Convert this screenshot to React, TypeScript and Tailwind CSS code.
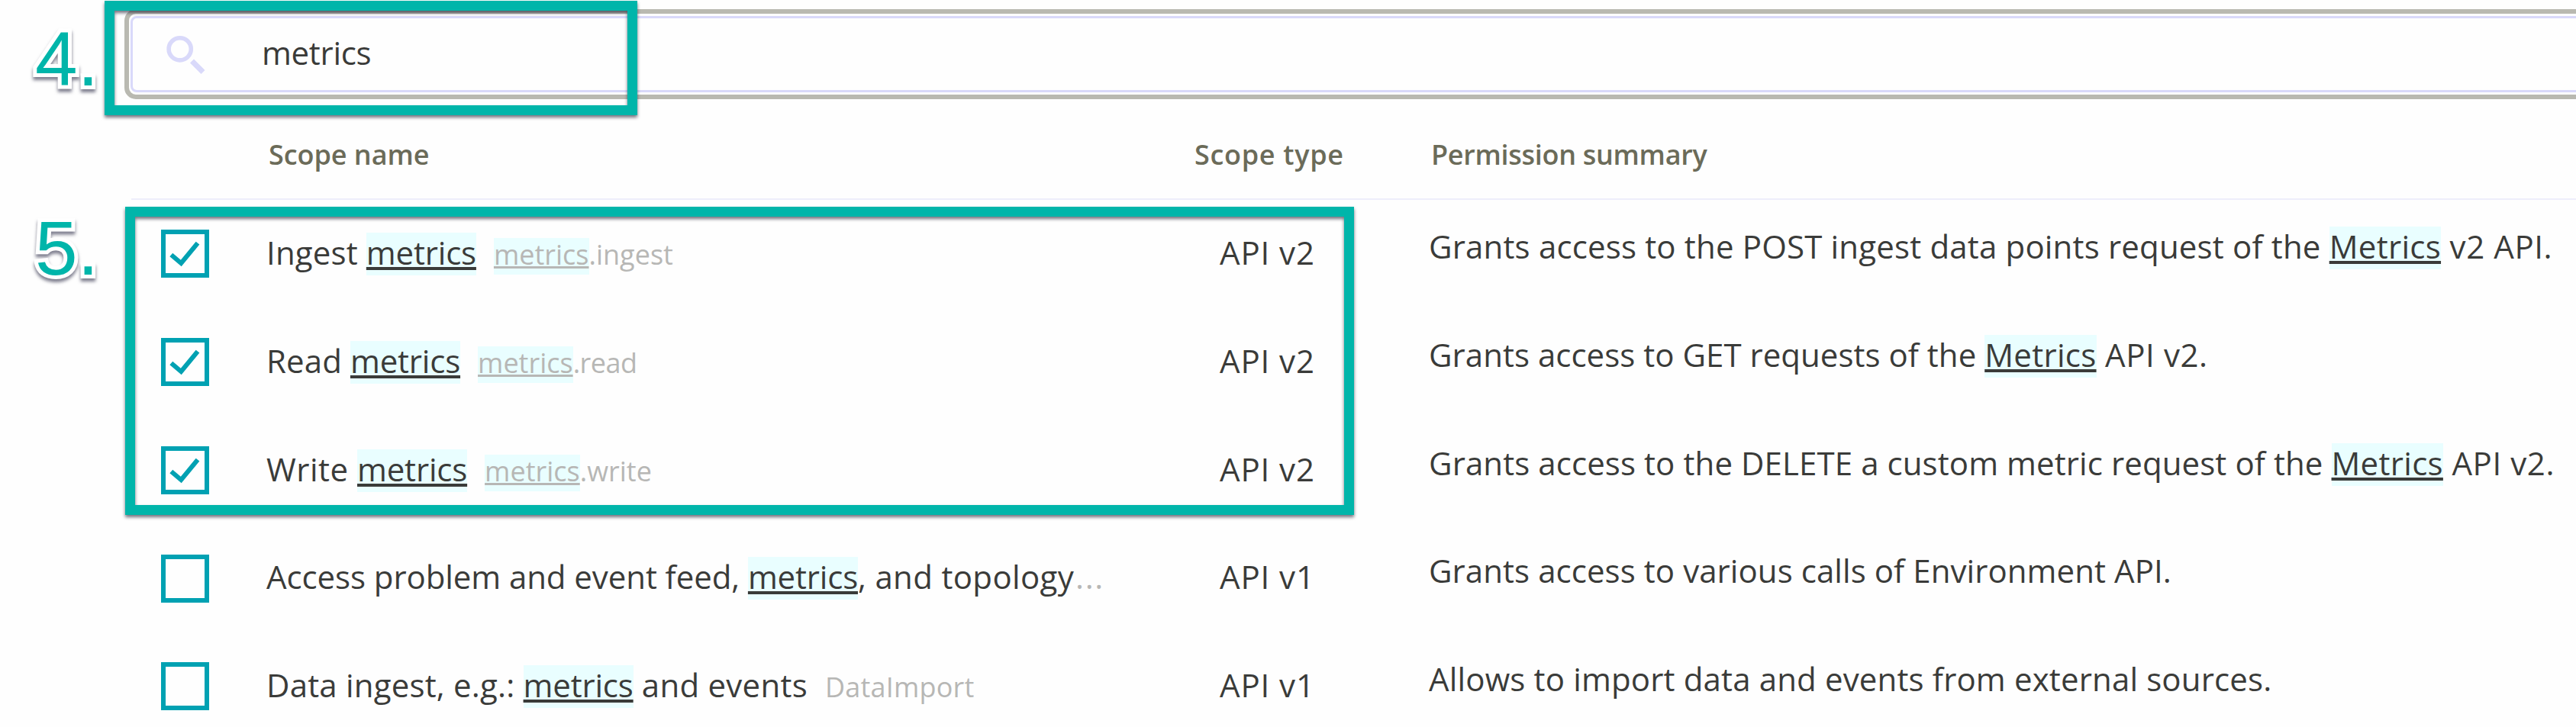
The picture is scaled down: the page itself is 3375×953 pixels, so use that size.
import type { ReactNode } from "react";

function Mark({ children, className = "" }: { children: ReactNode; className?: string }) {
  return (
    <span
      className={`inline-block h-[56px] bg-[#e9feff] leading-[51.4px] underline decoration-4 underline-offset-[3px] [text-decoration-skip-ink:none] ${className}`}
    >
      {children}
    </span>
  );
}

function Code({ match, children }: { match?: string; children: ReactNode }) {
  return (
    <span className="ml-[23px] text-[36px] text-[#b7b7b5]">
      {match && (
        <span className="inline-block h-[48px] bg-[#e9feff] leading-[44px] underline decoration-[3px] underline-offset-2 [text-decoration-skip-ink:none]">
          {match}
        </span>
      )}
      {children}
    </span>
  );
}

function Checkbox({ checked }: { checked: boolean }) {
  return (
    <span
      role="checkbox"
      aria-checked={checked}
      className="mt-[39.4px] block h-[63px] w-[63px] shrink-0 border-[6px] border-[#00a1b2]"
    >
      {checked && (
        <svg viewBox="6 6 51 51" className="h-[51px] w-[51px]" fill="none">
          <path d="M13.3 33 L26.3 44 L48 17.7" stroke="#00a1b2" strokeWidth="6" />
        </svg>
      )}
    </span>
  );
}

type Scope = { checked: boolean; name: ReactNode; type: string; summary: ReactNode };

const scopes: Scope[] = [
  {
    checked: true,
    name: (
      <>
        <span className="tracking-[0.15px]">{"Ingest "}</span>
        <Mark className="tracking-[-0.18px]">metrics</Mark>
        <Code match="metrics">.ingest</Code>
      </>
    ),
    type: "API v2",
    summary: (
      <>
        <span className="tracking-[0.17px]">{"Grants access to the POST ingest data points request of the "}</span>
        <Mark className="tracking-[0.3px]">Metrics</Mark>
        <span className="tracking-[0.6px]">{" v2 API."}</span>
      </>
    ),
  },
  {
    checked: true,
    name: (
      <>
        <span className="tracking-[0.1px]">{"Read "}</span>
        <Mark className="tracking-[-0.18px]">metrics</Mark>
        <Code match="metrics">
          <span className="tracking-[-0.5px]">.read</span>
        </Code>
      </>
    ),
    type: "API v2",
    summary: (
      <>
        <span className="tracking-[0.03px]">{"Grants access to GET requests of the "}</span>
        <Mark className="tracking-[0.3px]">Metrics</Mark>
        <span className="tracking-[0.6px]">{" API v2."}</span>
      </>
    ),
  },
  {
    checked: true,
    name: (
      <>
        <span className="tracking-[0.5px]">{"Write "}</span>
        <Mark className="tracking-[-0.18px]">metrics</Mark>
        <Code match="metrics">.write</Code>
      </>
    ),
    type: "API v2",
    summary: (
      <>
        <span className="tracking-[0.09px]">{"Grants access to the DELETE a custom metric request of the "}</span>
        <Mark className="tracking-[0.3px]">Metrics</Mark>
        <span className="tracking-[0.6px]">{" API v2."}</span>
      </>
    ),
  },
  {
    checked: false,
    name: (
      <>
        <span className="tracking-[-0.08px]">{"Access problem and event feed, "}</span>
        <Mark className="tracking-[-0.18px]">metrics</Mark>
        <span className="tracking-[0.33px]">, and topology</span>
        <span className="ml-[2px] inline-block tracking-[1.6px] text-[#b7b7b5]">...</span>
      </>
    ),
    type: "API v1",
    summary: <span className="tracking-[0.07px]">Grants access to various calls of Environment API.</span>,
  },
  {
    checked: false,
    name: (
      <>
        <span className="tracking-[0.19px]">{"Data ingest, e.g.: "}</span>
        <Mark className="tracking-[-0.18px]">metrics</Mark>
        <span className="tracking-[0.25px]">{" and events"}</span>
        <Code>
          <span className="tracking-[0.2px]">DataImport</span>
        </Code>
      </>
    ),
    type: "API v1",
    summary: <span className="tracking-[0.15px]">Allows to import data and events from external sources.</span>,
  },
];

function SearchField() {
  return (
    <div className="ml-[163px] h-[118px] w-[3260px] rounded-[15px] border-[6px] border-[#b9b9b1] p-[3px] pl-[2px]">
      <div className="flex h-full items-start rounded-[8px] border-[3px] border-[#d9d9fa]">
        <svg viewBox="0 0 56 56" className="mt-[19px] ml-[41px] h-[56px] w-[56px] shrink-0" fill="none">
          <circle cx="20.7" cy="21.3" r="14.6" stroke="#d9d9fa" strokeWidth="5.6" />
          <path d="M36.5 37 L51 51.5" stroke="#d9d9fa" strokeWidth="7" />
        </svg>
        <span className="ml-[72px] text-[42px] leading-[90px] tracking-[-0.3px]">metrics</span>
      </div>
    </div>
  );
}

function Step({ children, className }: { children: string; className: string }) {
  return (
    <span
      className={`absolute left-[46px] font-['Liberation_Sans',sans-serif] text-[100px] leading-[100px] text-[#00b5aa] drop-shadow-[0_4px_2px_rgba(20,20,50,0.55)] [-webkit-text-stroke:10px_#fff] [paint-order:stroke_fill] ${className}`}
    >
      {children}
    </span>
  );
}

function Frame({ className }: { className: string }) {
  return (
    <div
      className={`absolute border-[13px] border-[#00b5aa] drop-shadow-[0_3px_2px_rgba(20,20,40,0.6)] ${className}`}
    />
  );
}

export default function App() {
  return (
    <div className="relative h-[953px] w-[3375px] overflow-hidden bg-[#fefefe] pt-[12px] font-['Open_Sans',sans-serif] whitespace-pre text-[#3a3b39]">
      <SearchField />

      <div className="ml-[172px] flex h-[132px] items-start border-b-2 border-[#eeeefb] text-[36px] leading-[146px] font-semibold text-[#6b6b59]">
        <div className="w-[1393px] pl-[180px] tracking-[-0.05px]">Scope name</div>
        <div className="w-[310px] tracking-[0.7px]">Scope type</div>
        <div className="tracking-[-0.3px]">Permission summary</div>
      </div>

      <div className="ml-[211px]">
        {scopes.map((scope, i) => (
          <div key={i} className="flex h-[141.75px] items-start text-[42px]">
            <Checkbox checked={scope.checked} />
            <div className="ml-[75px] w-[1249px] leading-[137.4px]">{scope.name}</div>
            <div className="w-[274px] leading-[137.4px] tracking-[0.9px]">{scope.type}</div>
            <div className="leading-[121.4px]">{scope.summary}</div>
          </div>
        ))}
      </div>

      <Step className="top-[27px]">4.</Step>
      <Frame className="top-[1px] left-[137px] h-[150px] w-[698px]" />
      <Step className="top-[275px]">5.</Step>
      <Frame className="top-[271px] left-[164px] h-[404px] w-[1610px]" />
    </div>
  );
}
